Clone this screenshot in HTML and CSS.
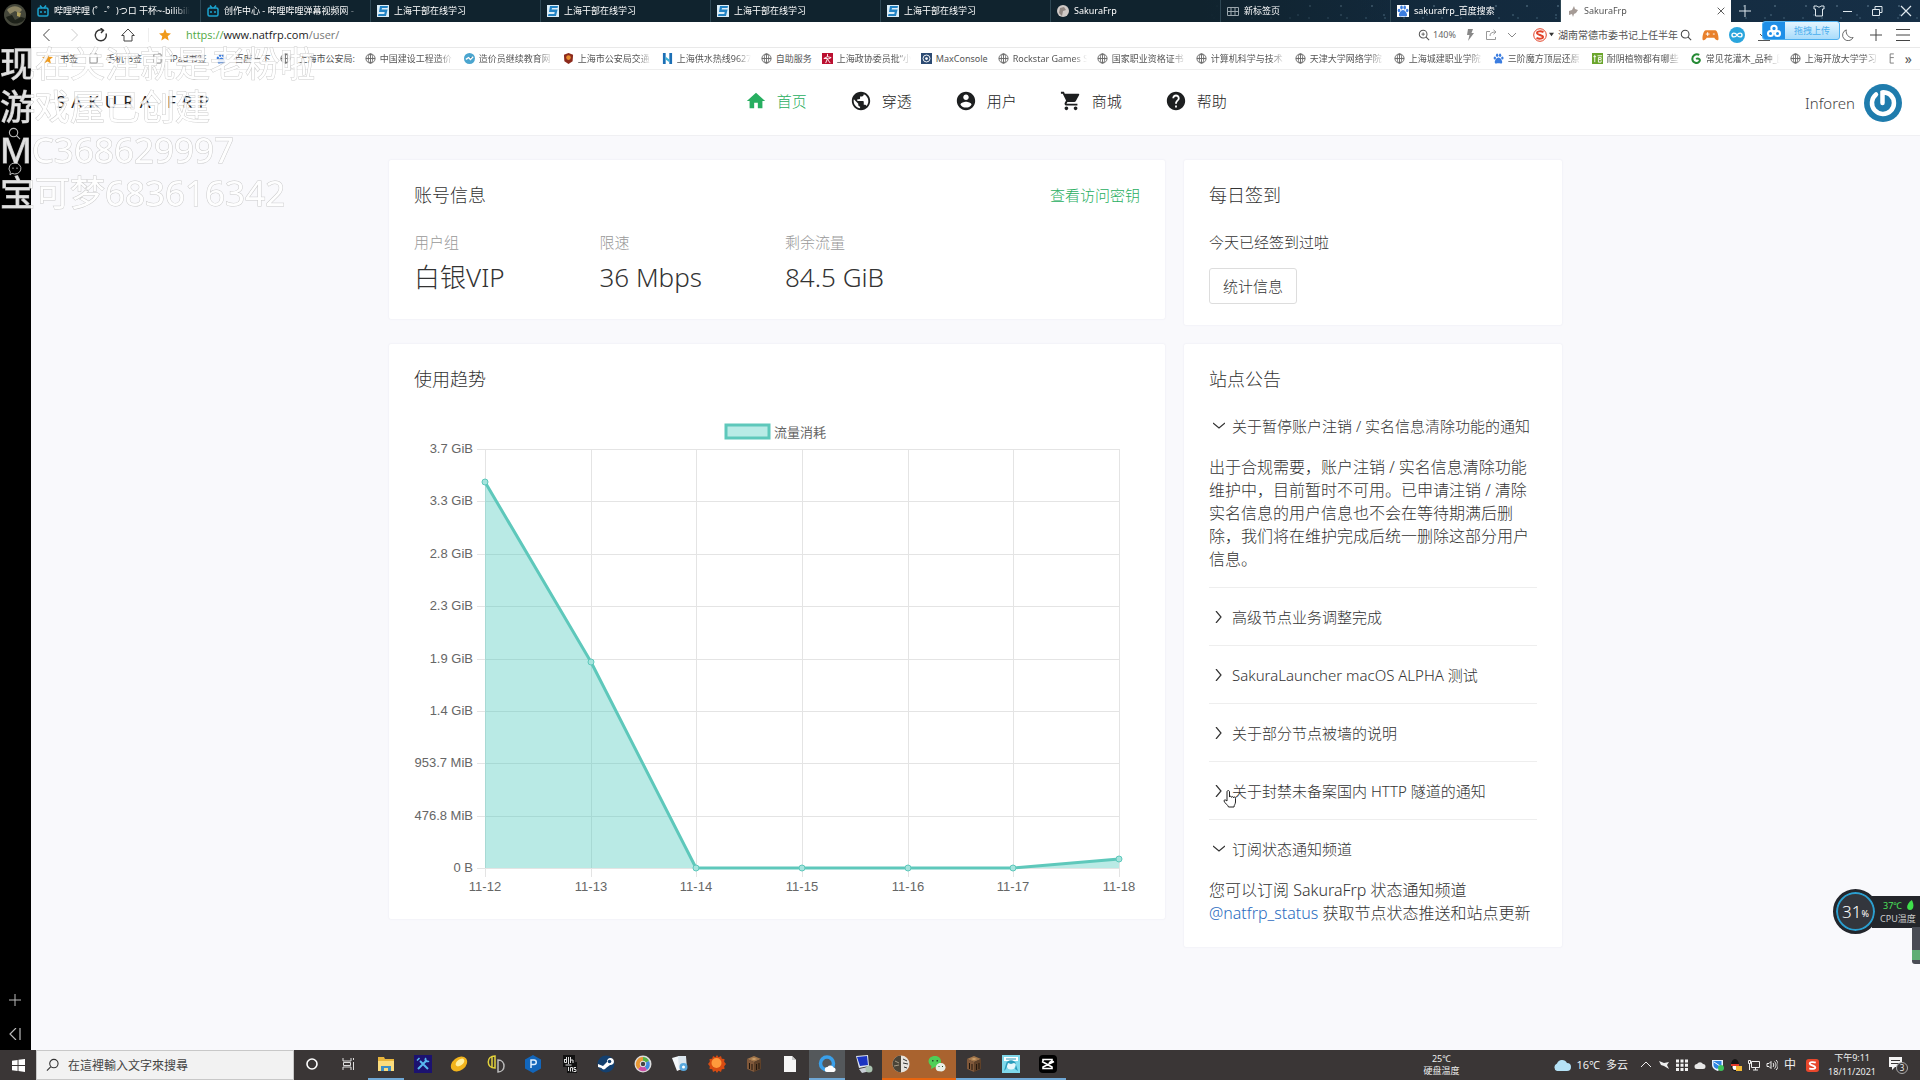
FILE: index.html
```html
<!DOCTYPE html>
<html lang="zh-CN">
<head>
<meta charset="utf-8">
<title>SakuraFrp</title>
<link rel="stylesheet" href="styles.css">
</head>
<body>
<svg class="sprite" aria-hidden="true">
  <symbol id="globe" viewBox="0 0 12 12"><g fill="none" stroke="#666" stroke-width="1"><circle cx="6" cy="6" r="5"/><ellipse cx="6" cy="6" rx="2.4" ry="5"/><path d="M1 6h10M6 1v10"/></g></symbol>
  <symbol id="bili" viewBox="0 0 12 12"><g fill="none" stroke="#1ba4d0" stroke-width="1.5"><rect x="1" y="3" width="10" height="8" rx="1.5"/><path d="M3 .5 5 3M9 .5 7 3M4 6v2M8 6v2"/></g></symbol>
  <symbol id="study" viewBox="0 0 12 12"><path fill="#d9edf9" d="M0 0h12v12H0z"/><path fill="#2182c4" d="M3 1h8l-.5 2H5l-.4 1.5h6L9 11H1l.5-2h5.800l.4-2H2z"/></symbol>
  <symbol id="paw" viewBox="0 0 12 12"><g fill="#3b7de0"><ellipse cx="2" cy="5.500" rx="1.300" ry="1.700"/><ellipse cx="4.500" cy="2.500" rx="1.300" ry="1.900"/><ellipse cx="7.700" cy="2.500" rx="1.300" ry="1.900"/><ellipse cx="10.200" cy="5.500" rx="1.300" ry="1.700"/><path d="M6 5c2 0 4.500 3.500 4 5.500-.5 1.500-2.500.8-4 .8s-3.500.7-4-.8C1.500 8.500 4 5 6 5z"/></g></symbol>
  <symbol id="page" viewBox="0 0 12 12"><rect x="2" y="1" width="8" height="10" rx="1" fill="none" stroke="#777"/></symbol>
  <symbol id="crafting" viewBox="0 0 18 18"><path fill="#a3764a" d="M9 1l7 3-7 3-7-3z"/><path fill="#80583a" d="M2 4l7 3v10l-7-3z"/><path fill="#5f4129" d="M16 4 9 7v10l7-3z"/><path stroke="#23170d" d="M4.500 8v6M7 9v6M11.500 9v6M14 8v6"/><path fill="#d1a671" d="M6 4l3-1 3 1-3 1z"/></symbol>
  <symbol id="sogou" viewBox="0 0 14 14"><path fill="none" stroke="currentColor" stroke-width="2" d="M10.500 4C8 3 4 3 4 5s6 2 6 4-4 2-6.500 1"/></symbol>
  <symbol id="chevron" viewBox="0 0 12 12"><path fill="none" stroke="currentColor" stroke-width="1.200" d="M3 0l5 6-5 6"/></symbol>
  <symbol id="lens" viewBox="0 0 14 14"><g fill="none" stroke="currentColor" stroke-width="1.200"><circle cx="6" cy="6" r="4.500"/><path d="M9.200 9.200 13 13"/></g></symbol>
  <symbol id="plus" viewBox="0 0 12 12"><path fill="none" stroke="currentColor" d="M6 0v12M0 6h12"/></symbol>
  <symbol id="cross" viewBox="0 0 12 12"><path fill="none" stroke="currentColor" stroke-width="1.200" d="M1 1l10 10M11 1 1 11"/></symbol>
</svg>

<div class="desktop">
  <aside class="rail">
    <svg class="rail-avatar" viewBox="0 0 22 22"><circle cx="11" cy="11" r="11" fill="#45473b"/><path fill="#8d8564" d="M3 6c4-5 12-5 15 0l-3 3-4-2-5 3z"/><path fill="#1d2119" d="M2 13l6-2 3 5 6-3 4 1c-2 6-14 9-19-1z"/><path fill="#b3a25c" d="M13 8l4 1-1 4-3-1z"/></svg>
    <svg class="rail-lens" viewBox="0 0 14 14"><use href="#lens"/></svg>
    <svg class="rail-chat" viewBox="0 0 14 14"><path fill="none" stroke="#bbb" d="M7 1a6 5.500 0 1 1-3 10.300L2 13l.3-3A5.500 5.500 0 0 1 7 1z"/><path fill="#bbb" d="M4.500 5.500h1v1.500h-1zM8.500 5.500h1v1.500h-1z"/></svg>
    <button class="rail-btn rail-add" aria-label="添加"><svg viewBox="0 0 12 12"><use href="#plus"/></svg></button>
    <button class="rail-btn" aria-label="收起"><svg viewBox="0 0 12 12"><path fill="none" stroke="#bbb" stroke-width="1.200" d="M7 0 1 6l6 6M11 0v12"/></svg></button>
  </aside>

  <div class="browser">
    <div class="tabs">
      <a class="tab" href="#"><svg><use href="#bili"/></svg><span>哔哩哔哩 (゜-゜)つロ 干杯~-bilibili</span></a>
      <a class="tab" href="#"><svg><use href="#bili"/></svg><span>创作中心 - 哔哩哔哩弹幕视频网 -</span></a>
      <a class="tab" href="#"><svg><use href="#study"/></svg><span>上海干部在线学习</span></a>
      <a class="tab" href="#"><svg><use href="#study"/></svg><span>上海干部在线学习</span></a>
      <a class="tab" href="#"><svg><use href="#study"/></svg><span>上海干部在线学习</span></a>
      <a class="tab" href="#"><svg><use href="#study"/></svg><span>上海干部在线学习</span></a>
      <a class="tab" href="#"><svg viewBox="0 0 12 12"><circle cx="6" cy="6" r="6" fill="#cfc9c6"/><path fill="#8f8681" d="M3 3l4-1 2 3-3 1-1 5-3-3z"/></svg><span>SakuraFrp</span></a>
      <a class="tab" href="#"><svg viewBox="0 0 12 12"><path fill="none" stroke="#9aa6ad" d="M.5 2.500h11v8H.5zM4 2.500v8M8 2.500v8M.5 6.500h11"/></svg><span>新标签页</span></a>
      <a class="tab" href="#"><svg viewBox="0 0 12 12"><path fill="#fff" d="M0 0h12v12H0z"/><use href="#paw"/></svg><span>sakurafrp_百度搜索</span></a>
      <a class="tab tab-on" href="#"><svg viewBox="0 0 12 12"><path fill="#a59b96" d="M2 6l3-1 2-4 1 3 3 1-2 3-2 1-1 3-1-3-3 1z"/></svg><span>SakuraFrp</span><svg class="tab-x"><use href="#cross"/></svg></a>
      <div class="win">
        <button aria-label="新标签"><svg viewBox="0 0 12 12"><use href="#plus"/></svg></button>
        <i class="grow"></i>
        <button aria-label="皮肤"><svg viewBox="0 0 12 12"><path fill="none" stroke="currentColor" d="M1 1h3c1 1.500 3 1.500 4 0h3v3H9.500v7h-7V4H1z"/></svg></button>
        <button aria-label="最小化"><svg viewBox="0 0 12 12"><path stroke="currentColor" d="M1 6.500h9"/></svg></button>
        <button aria-label="还原"><svg viewBox="0 0 12 12"><path fill="none" stroke="currentColor" d="M1.500 4.500h7v6h-7zM4 4V1.500h7v6H9"/></svg></button>
        <button aria-label="关闭"><svg viewBox="0 0 12 12"><use href="#cross"/></svg></button>
      </div>
    </div>

    <div class="bar">
      <div class="bar-nav">
        <button aria-label="后退"><svg viewBox="0 0 14 14"><path fill="none" stroke="#444" d="M9.500 1l-6 6 6 6"/></svg></button>
        <button aria-label="前进"><svg viewBox="0 0 14 14"><path fill="none" stroke="#ccc" d="M4.500 1l6 6-6 6"/></svg></button>
        <button aria-label="刷新"><svg viewBox="0 0 14 14"><path fill="none" stroke="#333" stroke-width="1.400" d="M12 5.500A5.500 5.500 0 1 1 9 2.200M6.500 0 9.500 2.300 7 5"/></svg></button>
        <button aria-label="主页"><svg viewBox="0 0 14 14"><path fill="none" stroke="#444" d="M.7 7.500 7 1l6.300 6.500H11V13H3V7.500z"/></svg></button>
      </div>
      <svg class="star" viewBox="0 0 12 12"><path fill="#f09a1a" d="M6 0l1.700 4 4.300.4-3.300 2.800 1 4.300L6 9.200l-3.700 2.300 1-4.300L0 4.400 4.300 4z"/></svg>
      <div class="url"><b>https://</b>www.natfrp.com<i>/user/</i></div>
      <div class="bar-tools">
        <svg viewBox="0 0 14 14"><g color="#555"><use href="#lens"/></g><path stroke="#555" d="M4 6h4M6 4v4"/></svg>
        <span class="zoom">140%</span>
        <svg class="t-bolt" viewBox="0 0 12 12"><path fill="#888" d="M4 0h5L7.500 4H10L4 12l1.500-6H3z"/></svg>
        <svg class="t-share" viewBox="0 0 12 12"><path fill="none" stroke="#999" d="M5 2.500H1.500v8h9V8M5 7c0-3 2-4 5.500-4M8.500.8l2.500 2.200-2.500 2.200"/></svg>
        <svg class="t-down" viewBox="0 0 12 12"><path fill="none" stroke="#888" d="M2 4l4 4 4-4"/></svg>
        <svg class="t-sogou" viewBox="0 0 14 14"><circle cx="7" cy="7" r="6.300" fill="#fff" stroke="#e2432a"/><g color="#e2432a"><use href="#sogou"/></g></svg>
        <svg class="t-caret" viewBox="0 0 6 6"><path fill="#333" d="M0 1h6L3 5z"/></svg>
        <input class="find" aria-label="搜索" value="湖南常德市委书记上任半年">
        <svg class="t-lens" viewBox="0 0 14 14"><use href="#lens"/></svg>
        <svg class="t-game" viewBox="0 0 18 14"><path fill="#e8802c" d="M4 2h10c2 0 3.500 5 3.500 9 0 2.500-3 2-4.500-1H5c-1.500 3-4.500 3.500-4.500 1C.5 7 2 2 4 2z"/><path stroke="#fff" d="M4 6h4M6 4v4M11.500 6h2"/></svg>
        <svg class="t-inf" viewBox="0 0 16 16"><circle cx="8" cy="8" r="8" fill="#2aa5dd"/><path fill="none" stroke="#fff" stroke-width="1.400" d="M8 8C6.500 5.500 3 5.500 3 8s3.500 2.500 5 0 5-2.500 5 0-3.500 2.500-5 0z"/></svg>
        <svg class="t-load" viewBox="0 0 14 14"><path fill="none" stroke="#555" d="M7 1v8M3 6l4 4 4-4M1 12.500h12"/></svg>
        <svg class="t-moon" viewBox="0 0 14 14"><path fill="none" stroke="#555" d="M5 1a6.500 6.500 0 1 0 8 9C8 11 4 6 5 1z"/></svg>
        <svg class="t-plus" viewBox="0 0 12 12"><use href="#plus"/></svg>
        <svg class="t-menu" viewBox="0 0 14 14"><path stroke="#444" d="M0 1.500h14M0 7h14M0 12.500h14"/></svg>
      </div>
      <button class="drop"><svg viewBox="0 0 22 18"><path fill="#1e8fe8" d="M0 0h22v18H0z"/><g fill="none" stroke="#fff" stroke-width="2"><circle cx="11" cy="6.500" r="2.700"/><circle cx="7.500" cy="11.500" r="2.500"/><circle cx="14.500" cy="11.500" r="2.500"/></g></svg><span>拖拽上传</span></button>
    </div>

    <nav class="marks">
      <a class="wide" href="#"><svg viewBox="0 0 12 12"><path fill="#f09a1a" d="M6 0l1.700 4 4.300.4-3.300 2.800 1 4.300L6 9.200l-3.700 2.300 1-4.300L0 4.400 4.300 4z"/></svg>书签</a>
      <a class="wide" href="#"><svg><use href="#page"/></svg>手机书签</a>
      <a class="wide" href="#"><svg><use href="#page"/></svg>iPad书签</a>
      <a class="wide" href="#"><svg><use href="#paw"/></svg>百度一下</a>
      <a class="wide" href="#"><svg><use href="#globe"/></svg>上海市公安局:</a>
      <a href="#"><svg><use href="#globe"/></svg><span>中国建设工程造价</span></a>
      <a href="#"><svg viewBox="0 0 12 12"><circle cx="6" cy="6" r="6" fill="#4aa5cf"/><path stroke="#fff" stroke-width="1.500" d="M2 7l3-2 2 2 3-3"/></svg><span>造价员继续教育网</span></a>
      <a href="#"><svg viewBox="0 0 12 12"><path fill="#8c2a1c" d="M6 0l5 2-.5 7L6 12 1.500 9 1 2z"/><circle cx="6" cy="5" r="2.500" fill="#e88c2d"/></svg><span>上海市公安局交通</span></a>
      <a href="#"><svg viewBox="0 0 12 12"><path fill="#1c6fb5" d="M1 0h3v12H1zM8 0h3v12H8z"/><path fill="#38b3d8" d="M4 4l4 3v3L4 7z"/></svg><span>上海供水热线9627</span></a>
      <a href="#"><svg><use href="#globe"/></svg>自助服务</a>
      <a href="#"><svg viewBox="0 0 12 12"><path fill="#bb1030" d="M0 0h12v12H0z"/><path fill="none" stroke="#fff" d="M6 1v3L2 6h4l-2 5M6 4l4 1-4 2 3 4"/></svg><span>上海政协委员批“小</span></a>
      <a href="#"><svg viewBox="0 0 12 12"><path fill="#2c4a72" d="M0 0h12v12H0z"/><circle cx="6" cy="6" r="3.800" fill="none" stroke="#fff"/><circle cx="6" cy="6" r="1.500" fill="#fff"/></svg>MaxConsole</a>
      <a href="#"><svg><use href="#globe"/></svg><span>Rockstar Games S</span></a>
      <a href="#"><svg><use href="#globe"/></svg><span>国家职业资格证书</span></a>
      <a href="#"><svg><use href="#globe"/></svg><span>计算机科学与技术</span></a>
      <a href="#"><svg><use href="#globe"/></svg><span>天津大学网络学院</span></a>
      <a href="#"><svg><use href="#globe"/></svg><span>上海城建职业学院</span></a>
      <a href="#"><svg><use href="#paw"/></svg><span>三阶魔方顶层还原</span></a>
      <a href="#"><svg viewBox="0 0 12 12"><path fill="#6aa52b" d="M0 0h12v12H0z"/><path fill="none" stroke="#fff" d="M3 2v8M1.500 4h3M6 3h5M7 5h3v2H7zM7 7v3h3V8"/></svg><span>耐阴植物都有哪些</span></a>
      <a href="#"><svg viewBox="0 0 12 12"><path fill="none" stroke="#258a34" stroke-width="2.200" d="M9 2C5 0 1 3 1.500 7S7 12 9 9.500 8 5 5.500 6.500"/></svg><span>常见花灌木_品种_图</span></a>
      <a href="#"><svg><use href="#globe"/></svg><span>上海开放大学学习</span></a>
      <a class="half" href="#"><svg viewBox="0 0 6 12"><path fill="none" stroke="#777" d="M5 1H1v10h4M1 5h4"/></svg></a>
      <button class="more" aria-label="更多">»</button>
    </nav>

    <header class="site">
      <a class="logo" href="#">SAKURA FRP</a>
      <nav class="menu">
        <a class="on" href="#"><svg viewBox="0 0 24 24"><path d="M10 20v-6h4v6h5v-8h3L12 3 2 12h3v8z"/></svg>首页</a>
        <a href="#"><svg viewBox="0 0 24 24"><path d="M12 2C6.480 2 2 6.480 2 12s4.480 10 10 10 10-4.480 10-10S17.520 2 12 2zm-1 17.930c-3.950-.49-7-3.850-7-7.930 0-.62.080-1.210.21-1.790L9 15v1c0 1.100.9 2 2 2v1.930zm6.900-2.540c-.26-.81-1-1.390-1.900-1.390h-1v-3c0-.55-.45-1-1-1H8v-2h2c.55 0 1-.45 1-1V7h2c1.100 0 2-.9 2-2v-.41c2.930 1.190 5 4.060 5 7.410 0 2.080-.8 3.970-2.100 5.390z"/></svg>穿透</a>
        <a href="#"><svg viewBox="0 0 24 24"><path d="M12 2C6.480 2 2 6.480 2 12s4.480 10 10 10 10-4.480 10-10S17.520 2 12 2zm0 3c1.660 0 3 1.340 3 3s-1.340 3-3 3-3-1.340-3-3 1.340-3 3-3zm0 14.200c-2.500 0-4.710-1.280-6-3.220.030-1.990 4-3.080 6-3.080 1.990 0 5.970 1.090 6 3.080-1.290 1.940-3.500 3.220-6 3.220z"/></svg>用户</a>
        <a href="#"><svg viewBox="0 0 24 24"><path d="M7 18c-1.100 0-1.990.9-1.990 2S5.900 22 7 22s2-.9 2-2-.9-2-2-2zM1 2v2h2l3.600 7.590-1.350 2.450c-.16.28-.25.61-.25.960 0 1.100.9 2 2 2h12v-2H7.420c-.14 0-.25-.11-.25-.25l.030-.12.9-1.630h7.450c.75 0 1.410-.41 1.750-1.030l3.580-6.490c.080-.14.120-.31.120-.48 0-.55-.45-1-1-1H5.210l-.94-2H1zm16 16c-1.100 0-1.990.9-1.990 2s.89 2 1.990 2 2-.9 2-2-.9-2-2-2z"/></svg>商城</a>
        <a href="#"><svg viewBox="0 0 24 24"><path d="M12 2C6.480 2 2 6.480 2 12s4.480 10 10 10 10-4.480 10-10S17.520 2 12 2zm1 17h-2v-2h2v2zm2.070-7.750l-.9.920C13.450 12.900 13 13.500 13 15h-2v-.5c0-1.100.45-2.100 1.170-2.830l1.240-1.260c.37-.36.590-.86.590-1.410 0-1.100-.9-2-2-2s-2 .9-2 2H8c0-2.210 1.790-4 4-4s4 1.790 4 4c0 .88-.36 1.680-.93 2.250z"/></svg>帮助</a>
      </nav>
      <a class="me" href="#">Inforen<svg viewBox="0 0 38 38"><circle cx="19" cy="19" r="19" fill="#1f7cad"/><path fill="none" stroke="#fff" stroke-width="4.500" stroke-linecap="round" d="M12 10.500A11 11 0 1 0 26.500 11C24 8.800 20 8 18.500 8.500V19"/></svg></a>
    </header>

    <main class="page">
      <section class="card">
        <div class="head"><h2>账号信息</h2><a href="#">查看访问密钥</a></div>
        <dl class="stats">
          <div><dt>用户组</dt><dd>白银VIP</dd></div>
          <div><dt>限速</dt><dd>36 Mbps</dd></div>
          <div><dt>剩余流量</dt><dd>84.5 GiB</dd></div>
        </dl>
      </section>

      <section class="card sign">
        <div class="head"><h2>每日签到</h2></div>
        <p>今天已经签到过啦</p>
        <button class="btn">统计信息</button>
      </section>

      <section class="card">
        <div class="head"><h2>使用趋势</h2></div>
        <svg class="chart" viewBox="0 0 726 483">
          <rect x="312" y="15" width="43" height="13" fill="#b9ebe6" stroke="#5ec8bb" stroke-width="3"/>
          <text x="360" y="27">流量消耗</text>
          <path class="grid" d="M63 39.500H705M63 91.500H705M63 144.500H705M63 196.500H705M63 249.500H705M63 301.500H705M63 353.500H705M63 406.500H705M63 458.500H705M71.500 39V467M177.500 39V467M282.500 39V467M388.500 39V467M494.500 39V467M599.500 39V467M705.500 39V467"/>
          <path fill="#4bc8bc" fill-opacity=".39" d="M71 72 177 252 282 458H599L705 449V458H71z"/>
          <path fill="none" stroke="#5ec8bb" stroke-width="3" stroke-linejoin="round" d="M71 72 177 252 282 458H599L705 449"/>
          <g class="dots"><circle cx="71" cy="72" r="3"/><circle cx="177" cy="252" r="3"/><circle cx="282" cy="458" r="3"/><circle cx="388" cy="458" r="3"/><circle cx="494" cy="458" r="3"/><circle cx="599" cy="458" r="3"/><circle cx="705" cy="449" r="3"/></g>
          <g text-anchor="end"><text x="59" y="43">3.7 GiB</text><text x="59" y="95">3.3 GiB</text><text x="59" y="148">2.8 GiB</text><text x="59" y="200">2.3 GiB</text><text x="59" y="253">1.9 GiB</text><text x="59" y="305">1.4 GiB</text><text x="59" y="357">953.7 MiB</text><text x="59" y="410">476.8 MiB</text><text x="59" y="462">0 B</text></g>
          <g text-anchor="middle"><text x="71" y="481">11-12</text><text x="177" y="481">11-13</text><text x="282" y="481">11-14</text><text x="388" y="481">11-15</text><text x="494" y="481">11-16</text><text x="599" y="481">11-17</text><text x="705" y="481">11-18</text></g>
        </svg>
      </section>

      <section class="card news">
        <div class="head"><h2>站点公告</h2></div>
        <details open><summary><svg><use href="#chevron"/></svg>关于暂停账户注销 / 实名信息清除功能的通知</summary>
          <p>出于合规需要，账户注销 / 实名信息清除功能维护中，目前暂时不可用。已申请注销 / 清除实名信息的用户信息也不会在等待期满后删除，我们将在维护完成后统一删除这部分用户信息。</p></details>
        <details><summary><svg><use href="#chevron"/></svg>高级节点业务调整完成</summary></details>
        <details><summary><svg><use href="#chevron"/></svg>SakuraLauncher macOS ALPHA 测试</summary></details>
        <details><summary><svg><use href="#chevron"/></svg>关于部分节点被墙的说明</summary></details>
        <details><summary><svg><use href="#chevron"/></svg>关于封禁未备案国内 HTTP 隧道的通知</summary></details>
        <details open><summary><svg><use href="#chevron"/></svg>订阅状态通知频道</summary>
          <p>您可以订阅 SakuraFrp 状态通知频道<br><a href="#">@natfrp_status</a> 获取节点状态推送和站点更新</p></details>
      </section>
    </main>
  </div>
</div>

<footer class="taskbar">
  <button class="start" aria-label="开始"><svg viewBox="0 0 14 14"><path fill="#fff" d="M0 2l6-1v5.500H0zM7 .9 14 0v6.500H7zM0 7.500h6V13l-6-1zM7 7.500h7V14l-7-1z"/></svg></button>
  <label class="search"><svg viewBox="0 0 14 14"><path fill="none" stroke="#333" stroke-width="1.200" d="M5 9 1 13"/><circle cx="8.500" cy="5.500" r="4.500" fill="none" stroke="#333" stroke-width="1.200"/></svg><input placeholder="在這裡輸入文字來搜尋"></label>
  <div class="apps">
    <a href="#"><svg viewBox="0 0 18 18"><circle cx="9" cy="9" r="5" fill="none" stroke="#fff" stroke-width="1.600"/></svg></a>
    <a href="#"><svg viewBox="0 0 18 18"><path fill="none" stroke="#ddd" d="M3 3v3h8V3M3 15v-3h8v3M3.500 7.500h7v3h-7zM13.500 3v2M13.500 7v8"/></svg></a>
    <a class="run" href="#"><svg viewBox="0 0 18 18"><path fill="#e8b53c" d="M1 2h6l1 2h9v12H1z"/><path fill="#fbdc7d" d="M1 6h16v10H1z"/><path fill="#3e8fc6" d="M4 16v-5h10v5h-3v-3H7v3z"/></svg></a>
    <a href="#"><svg viewBox="0 0 18 18"><path fill="#1c1270" d="M0 0h18v18H0z"/><path stroke="#58b9ef" stroke-width="2" d="M4 14 13 5M6 6l8 8"/><path fill="none" stroke="#58b9ef" stroke-width="1.500" d="M12 3a2 2 0 1 0 3 3M3 5.500 5.500 3"/></svg></a>
    <a href="#"><svg viewBox="0 0 18 18"><ellipse cx="9" cy="9" rx="9" ry="6.500" fill="#f2b41c" transform="rotate(-38 9 9)"/><ellipse cx="10" cy="7.500" rx="5" ry="3" fill="#fff0a0" transform="rotate(-38 10 7.500)"/></svg></a>
    <a href="#"><svg viewBox="0 0 18 18"><g fill="none" stroke-width="1.500"><path stroke="#e2d23c" d="M8 1v12C-1 13-1 1 8 1zM5 2v10"/><path stroke="#bbb" d="M11 5v12c8 0 8-12 0-12z"/></g></svg></a>
    <a href="#"><svg viewBox="0 0 18 18"><path fill="#1266bb" d="M9 0l8 4.500v9L9 18l-8-4.500v-9z"/><path fill="none" stroke="#dff0ff" stroke-width="1.500" d="M7 13V5h3a2 2 0 0 1 0 4.500H7"/></svg></a>
    <a href="#"><svg viewBox="0 0 18 18"><path fill="#111" d="M2 0h12v7h2v11H6v-6H2z"/><path fill="none" stroke="#ddd" d="M3 4.500h2.500v3H3.500v-3M5.500 2v5.500M7.500 2v7M9.500 2v6M9.500 5h2.500v3M4.500 10h6M7.500 12v4M9.500 12.500v4M9.500 12.500h2v4M15 12.500h-2v2h2v2h-2.500"/></svg></a>
    <a href="#"><svg viewBox="0 0 18 18"><circle cx="9" cy="9" r="8.500" fill="#14406f"/><path fill="#fff" d="M1 9l5 2 4-4a3.500 3.500 0 1 1 3 3l-4 3a2.500 2.500 0 0 1-4.500 0L1 12z"/><circle cx="12.500" cy="6.500" r="1.800" fill="#14406f"/></svg></a>
    <a href="#"><svg viewBox="0 0 18 18"><circle cx="9" cy="9" r="8.500" fill="#ddd"/><path fill="#56b34a" d="M9 2a7 7 0 0 1 6 4L9 9z"/><path fill="#3f8ce0" d="M15 6a7 7 0 0 1-2 9L9 9z"/><path fill="#c94fa5" d="M13 15a7 7 0 0 1-9-1l5-5z"/><path fill="#e89836" d="M4 14a7 7 0 0 1 5-12v7z"/><circle cx="9" cy="9" r="2.800" fill="#444" stroke="#eee"/></svg></a>
    <a href="#"><svg viewBox="0 0 18 18"><path fill="#f4f7fa" d="M1 3l7-2 5 12-7 3z"/><path fill="#dbe6ee" d="M7 1h8l1 13H8z"/><circle cx="12.500" cy="12" r="4" fill="#58a8de"/><circle cx="12.500" cy="12" r="1.500" fill="#fff"/></svg></a>
    <a href="#"><svg viewBox="0 0 18 18"><path fill="#d84c12" d="M9 0l1.500 2.200L13 1l.8 2.800 2.700.2-.3 2.700L18 9l-1.800 2.300.3 2.700-2.700.2L13 17l-2.500-1.200L9 18l-1.500-2.200L5 17l-.8-2.800L1.500 14l.3-2.700L0 9l1.800-2.300L1.500 4l2.700-.2L5 1l2.500 1.200z"/><circle cx="8.500" cy="8" r="5" fill="#ff9a3c"/></svg></a>
    <a href="#"><svg><use href="#crafting"/></svg></a>
    <a href="#"><svg viewBox="0 0 18 18"><path fill="#f6f6f6" d="M3 1h8l4 4v12H3z"/><path fill="#c9c9c9" d="M11 1l4 4h-4z"/></svg></a>
    <a class="run active" href="#"><svg viewBox="0 0 18 18"><circle cx="9" cy="8.500" r="6.500" fill="none" stroke="#3aa0ea" stroke-width="3.500"/><path fill="#fff" d="M9 17a2.500 2.500 0 0 1 .5-5 3.500 3.500 0 0 1 6 .5A2.300 2.300 0 0 1 16 17z"/></svg></a>
    <a href="#"><svg viewBox="0 0 18 18"><path fill="#dfe5ee" d="M1 1l12-1 1 11-10 2z"/><path fill="#1b35c2" d="M2 2l10-1 1 9-8 1z"/><path fill="#c9ced6" d="M4 14l9-2 2 4-8 2z"/><circle cx="14" cy="14" r="3.500" fill="#aac3b0"/></svg></a>
    <a class="run alert" href="#"><svg viewBox="0 0 18 18"><circle cx="9" cy="9" r="8.500" fill="#e7e3dd"/><path fill="#4a4438" d="M9 .5a8.500 8.500 0 0 0 0 17z"/><path stroke="#333" d="M11 4l4 2M11 8l5 1M12 12l3 1"/><path stroke="#a49a85" d="M3 6l4 2M2 11l5-1"/></svg></a>
    <a class="run alert" href="#"><svg viewBox="0 0 18 18"><path fill="#4fcf57" d="M7 1c8 0 8 11 0 11l-4 2 .5-3C-1.500 8 0 1 7 1z"/><path fill="#e9efe7" d="M12.500 8c6.500 0 6.500 8 1 8.500L9.500 16C6 14 8 8 12.500 8z"/><path fill="#264f2a" d="M4 5h1.500v1.500H4zM8.500 5H10v1.500H8.500zM10.500 11h1v1h-1zM14 11h1v1h-1z"/></svg></a>
    <a class="run" href="#"><svg><use href="#crafting"/></svg></a>
    <a class="run" href="#"><svg viewBox="0 0 18 18"><path fill="#7fd8ea" d="M0 0h18v18H0z"/><path fill="#fff" d="M2 2h14v4H2z"/><circle cx="9" cy="10" r="4.500" fill="#e7f7fb"/><path fill="#2b9cbb" d="M4 9c1-5 9-5 10 0l-2-1-3 1-3-1-2 6-2 2zM14 10l2 6-3-2zM4 3.500h10v1H4z"/></svg></a>
    <a class="run" href="#"><svg viewBox="0 0 18 18"><rect width="18" height="18" rx="4" fill="#000"/><path fill="none" stroke="#fff" stroke-width="1.600" d="M15 6.500 4 12v1.500h9V12L3 6.500M4 6V4.500h9V6l-3 2"/></svg></a>
  </div>
  <div class="disk">25℃<br>硬盘温度</div>
  <div class="tray">
    <svg class="cloud" viewBox="0 0 18 14"><path fill="#b5e2f6" d="M4 13a4 4 0 0 1 0-7.500A5.500 5.500 0 0 1 14 5a4 4 0 0 1 0 8z"/></svg>
    <span class="temp">16℃</span><span class="temp">多云</span>
    <svg class="up" viewBox="0 0 12 12"><path fill="none" stroke="#eee" d="M1 8l5-5 5 5"/></svg>
    <svg viewBox="0 0 12 12"><path fill="#eee" d="M1 2l5 2 5-1-2 3 2 4-5-3-3-1z"/></svg>
    <svg viewBox="0 0 12 12"><path stroke="#f2f2f2" stroke-width="3" stroke-dasharray="3 1.500" d="M0 2h12M0 6.300h12M0 10.500h12"/></svg>
    <svg viewBox="0 0 12 12"><path fill="#e8e8e8" d="M3 10a2.500 2.500 0 0 1 0-5 3.500 3.500 0 0 1 6 0 2.500 2.500 0 0 1 0 5z"/></svg>
    <svg viewBox="0 0 12 12"><path fill="#e8f3ff" d="M0 1h11v5c0 3-3 5-5.500 6C3 11 0 9 0 6z"/><path fill="#2f86e2" d="M1.500 2h8v4L5 10C3 9 1.500 8 1.500 6z"/><path stroke="#fff" d="M2 3l6 4"/><circle cx="9" cy="9" r="3" fill="#3cc25b"/></svg>
    <svg viewBox="0 0 12 12"><ellipse cx="5" cy="6" rx="4" ry="6" fill="#151515"/><ellipse cx="5" cy="8" rx="2.500" ry="3" fill="#fff"/><path fill="#e33a2a" d="M1 5h8v2H1z"/><path fill="#f3b935" d="M6 7h6v5H6z"/></svg>
    <svg viewBox="0 0 12 12"><path fill="none" stroke="#eee" d="M3.500 2.500h8v6h-8zM5 11h5M7.500 9v2M.5 1.500h2v3h-2zM1.500 5v6"/></svg>
    <svg viewBox="0 0 12 12"><path fill="none" stroke="#eee" d="M1 4.500h2l2-2v7l-2-2H1zM7 4c1 1 1 3 0 4M8.500 2.500c2 2 2 5 0 7M10 1c3 3 3 7 0 10"/></svg>
    <span class="ime">中</span>
    <svg class="so" viewBox="0 0 14 14"><rect width="14" height="14" rx="3" fill="#e8472c"/><g color="#fff"><use href="#sogou"/></g></svg>
    <time class="clock">下午9:11<br>18/11/2021</time>
    <svg class="note" viewBox="0 0 19 18"><path fill="#f4f4f4" d="M0 1h13v10H6l-3 3v-3H0z"/><path stroke="#3a3636" d="M2 4.500h9M2 7.500h9"/><circle cx="13" cy="12" r="5.500" fill="#3a3636" stroke="#aaa"/><text x="13" y="15">3</text></svg>
  </div>
</footer>

<div class="caption">现在关注就是老粉啦<br>游戏屋已创建<br>MC368629997<br>宝可梦683616342</div>

<div class="meter">
  <div class="meter-ring"><strong>31</strong><small>%</small></div>
  <div class="meter-pill"><span class="hot">37℃ <svg viewBox="0 0 8 12"><path fill="#3fe04b" d="M6 0c3 6 2 11-2 11S-1 5 6 0z"/></svg></span><span>CPU温度</span></div>
  <div class="meter-side"></div>
</div>

<svg class="hand" viewBox="0 0 14 18"><path fill="#fff" stroke="#222" d="M4 11V2c0-2 2.500-2 2.500 0v5c0-1 2-1 2 .3 0-1 2-1 2 .4 0-1 2-1 2 .6V12c0 2-1.500 3-1.500 5H5.500c0-1.500-4-4-4.500-6 0-1.500 1.500-1.500 3 0z"/></svg>
</body>
</html>
```
FILE: styles.css
```css
* { box-sizing: border-box; }
body {
  margin: 0;
  min-height: 100vh;
  display: flex;
  flex-direction: column;
  position: relative;
  overflow-x: hidden;
  background: #f9f9fc;
  color: #333;
  font: 300 15px/22px "Noto Sans", "Noto Sans CJK SC", sans-serif;
}
a { color: inherit; text-decoration: none; }
button { padding: 0; border: 0; background: none; color: inherit; font: inherit; }
svg { display: block; flex: none; }
h2, p, dl, dd { margin: 0; }
.sprite { position: absolute; width: 0; height: 0; }
.grow { flex: 1; }

.desktop { flex: 1; display: flex; }
.rail {
  width: 31px;
  display: flex;
  flex-direction: column;
  align-items: center;
  padding: 4px 2px 10px 0;
  background: #000;
  color: #bbb;
}
.rail-avatar { width: 22px; height: 22px; }
.rail-lens { width: 13px; height: 13px; margin-top: 101px; }
.rail-chat { width: 14px; height: 14px; margin-top: 22px; }
.rail-btn svg { width: 12px; height: 12px; }
.rail-btn { height: 12px; }
.rail-add { margin: auto 0 22px; }

.browser { flex: 1; min-width: 0; display: flex; flex-direction: column; }

/* tab strip */
.tabs {
  display: flex;
  height: 22px;
  font: 9px/22px "Noto Sans", "Noto Sans CJK SC", sans-serif;
  color: #fff;
  background:
    linear-gradient(90deg, #10232e 62%, transparent 72%),
    radial-gradient(circle at 8px 6px, #8fb0c4 0, transparent 1px) 0 0 / 31px 22px,
    radial-gradient(circle at 20px 15px, #6f93a8 0, transparent 1px) 0 0 / 43px 22px,
    radial-gradient(circle at 5px 18px, #5d8196 0, transparent 1px) 0 0 / 19px 22px,
    linear-gradient(90deg, #12283a 70%, #162f46);
}
.tab {
  flex: 0 1 170px;
  min-width: 0;
  display: flex;
  align-items: center;
  gap: 5px;
  padding: 0 6px;
  border-right: 1px solid #2d4653;
}
.tab svg { width: 12px; height: 12px; }
.tab span {
  flex: 0 1 136px;
  overflow: hidden;
  white-space: nowrap;
  -webkit-mask: linear-gradient(90deg, #000 88%, transparent);
  mask: linear-gradient(90deg, #000 88%, transparent);
}
.tab-on { background: #fff; color: #555; border: 0; }
.tab .tab-x { width: 8px; height: 8px; margin-left: auto; color: #333; }
.win { flex: 1; display: flex; align-items: center; gap: 17px; padding: 0 8px 0 8px; color: #dfe8ee; }
.win svg { width: 12px; height: 12px; }

/* address bar */
.bar {
  position: relative;
  display: flex;
  align-items: center;
  height: 26px;
  padding: 0 10px 0 9px;
  background: #fff;
  border-bottom: 1px solid #e9e9e9;
}
.bar-nav { display: flex; gap: 13px; padding-right: 13px; border-right: 1px solid #eee; }
.bar-nav svg { width: 14px; height: 14px; }
.star { width: 12px; height: 12px; margin: 0 15px 0 10px; }
.url { flex: 1; font: 400 11px/24px "Open Sans", sans-serif; color: #222; }
.url b { font-weight: 400; color: #53a93f; }
.url i { font-style: normal; color: #777; }
.bar-tools { display: flex; align-items: center; color: #444; }
.bar-tools svg { width: 12px; height: 12px; }
.zoom { margin: 0 8px 0 3px; font: 9px/12px "Noto Sans", sans-serif; color: #666; }
.bar-tools .t-share { margin: 0 9px; }
.bar-tools .t-sogou { width: 14px; height: 14px; margin: 0 2px 0 15px; }
.bar-tools .t-caret { width: 5px; height: 5px; margin-right: 4px; }
.find {
  width: 122px;
  padding: 0;
  border: 0;
  outline: 0;
  background: none;
  color: #555;
  font: 10px/16px "Noto Sans CJK SC", sans-serif;
}
.bar-tools .t-game { width: 17px; height: 14px; margin: 0 10px 0 10px; }
.bar-tools .t-inf { width: 16px; height: 16px; }
.bar-tools .t-load { width: 14px; height: 14px; margin: 0 71px 0 12px; }
.bar-tools .t-plus { margin: 0 14px 0 16px; }
.bar-tools .t-menu { width: 14px; height: 14px; }
.drop {
  position: absolute;
  right: 80px;
  top: -1px;
  display: flex;
  align-items: center;
  width: 78px;
  height: 19px;
  overflow: hidden;
  border: 1px solid #4fb0ef;
  border-radius: 3px;
  background: linear-gradient(#e4f5ff, #a9dcfb);
  color: #4aaeee;
  font: 9px/17px "Noto Sans CJK SC", sans-serif;
}
.drop svg { width: 22px; height: 18px; }
.drop span { flex: 1; }

/* bookmarks */
.marks {
  display: flex;
  align-items: center;
  gap: 10px;
  height: 22px;
  padding: 0 10px 0 11px;
  background: #fff;
  border-bottom: 1px solid #eee;
  color: #555;
  font: 400 9px/21px "Noto Sans", "Noto Sans CJK SC", sans-serif;
  white-space: nowrap;
}
.marks a { display: flex; align-items: center; gap: 4px; }
.marks .wide { gap: 7px; }
.marks svg { width: 11px; height: 11px; }
.marks .half svg { width: 6px; }
.marks span {
  width: 74px;
  overflow: hidden;
  -webkit-mask: linear-gradient(90deg, #000 80%, transparent);
  mask: linear-gradient(90deg, #000 80%, transparent);
}
.more { margin-left: auto; font-size: 14px; }

/* site header */
.site {
  display: grid;
  grid-template-columns: 102fr auto 100fr;
  align-items: center;
  height: 66px;
  padding: 0 18px 0 25px;
  background: #fff;
  border-bottom: 1px solid #f0f0f3;
}
.logo { padding-bottom: 2px; font: 400 17px/24px "Noto Sans", sans-serif; letter-spacing: 6px; color: #222; }
.menu { display: flex; gap: 43px; padding-bottom: 3px; color: #222; }
.menu a { display: flex; align-items: center; gap: 10px; }
.menu svg { width: 22px; height: 22px; fill: #1d1f20; }
.menu .on { color: #27ae60; }
.menu .on svg { fill: #27ae60; }
.me { justify-self: end; display: flex; align-items: center; gap: 9px; color: #444; }
.me svg { width: 38px; height: 38px; }

/* dashboard */
.page {
  width: 100%;
  max-width: 1173px;
  margin: 0 auto;
  padding: 24px 0;
  display: grid;
  grid-template-columns: minmax(0, 776fr) minmax(0, 378fr);
  gap: 19px;
  align-items: start;
}
.card { padding: 23px 25px 25px; background: #fff; border-radius: 2px; box-shadow: 0 0 2px #e6e6ee; }
.head { display: flex; justify-content: space-between; line-height: 24px; }
.head h2 { font-size: 18px; font-weight: 300; }
.head a { color: #27ae60; }
.stats { display: grid; grid-template-columns: repeat(4, 1fr); column-gap: 16px; margin-top: 24px; }
.stats dt { color: #999; }
.stats dd { margin-top: 7px; font-size: 26px; line-height: 34px; white-space: nowrap; }
.sign { padding-bottom: 21px; }
.sign p { margin: 24px 0 15px; }
.btn { display: block; height: 36px; padding: 0 13px; border: 1px solid #ddd; border-radius: 3px; background: #fff; }
.chart { width: 100%; height: auto; margin: 19px 0 1px; overflow: visible; }
.chart text { font: 400 13px "Liberation Sans", "Noto Sans CJK SC", sans-serif; fill: #666; }
.grid { fill: none; stroke: #e4e4e4; }
.dots { fill: #a5e4dd; stroke: #5ec8bb; }

.news { padding-bottom: 6px; }
.news .head { margin-bottom: 6px; }
details { border-bottom: 1px solid #eee; }
details:last-child { border: 0; }
summary { display: flex; align-items: center; gap: 7px; height: 57px; list-style: none; white-space: nowrap; cursor: pointer; }
summary svg { width: 12px; height: 12px; margin-left: 4px; }
details[open] summary svg { transform: rotate(90deg); }
details p { padding: 2px 0 16px; font-size: 16px; line-height: 23px; }
details a { color: #2b6cc0; }

/* taskbar */
.taskbar { display: flex; height: 30px; background: #3a3636; color: #eee; font: 400 9px/12px "Noto Sans", "Noto Sans CJK SC", sans-serif; }
.start { width: 36px; display: grid; place-items: center; }
.start svg { width: 13px; height: 13px; }
.search { width: 258px; display: flex; align-items: center; gap: 9px; padding-left: 9px; background: #f2f2f2; border: 1px solid #c8c8c8; }
.search svg { width: 13px; height: 14px; }
.search input { flex: 1; min-width: 0; padding: 0; border: 0; outline: 0; background: none; font: 12px/20px "Noto Sans CJK TC", sans-serif; }
.search input::placeholder { color: #444; opacity: 1; }
.apps { width: 772px; display: grid; grid-template-columns: repeat(21, 1fr); }
.apps a { display: grid; place-items: center; border-bottom: 2px solid transparent; }
.apps svg { width: 18px; height: 18px; }
.apps .run { border-color: #6fa8d6; }
.apps .active { background: #54585b; }
.apps .alert { background: #a9632f; border-color: #e8650f; }
.disk { margin: auto 93px auto auto; text-align: center; }
.tray { display: flex; align-items: center; gap: 6px; padding-right: 12px; }
.tray svg { width: 12px; height: 12px; }
.tray .cloud { width: 18px; height: 14px; }
.temp { font-size: 11px; }
.tray .up { margin-left: 6px; }
.ime { font-size: 12px; margin-right: 4px; }
.tray .so { width: 13px; height: 13px; }
.clock { margin: 0 7px 0 3px; text-align: center; line-height: 14px; }
.tray .note { width: 19px; height: 18px; }
.note text { font: 8px "Noto Sans", sans-serif; fill: #eee; text-anchor: middle; }

/* overlays */
.caption {
  position: absolute;
  left: 0;
  top: 42px;
  color: #fff;
  font: 400 35px/43px "Noto Sans", "Noto Sans CJK SC", sans-serif;
  -webkit-text-stroke: 1px #c4c4c4;
  paint-order: stroke fill;
  opacity: .88;
  pointer-events: none;
}
.meter { position: absolute; right: 0; top: 889px; display: flex; align-items: center; font: 400 9px/11px "Noto Sans", "Noto Sans CJK SC", sans-serif; }
.meter-ring {
  position: relative;
  z-index: 1;
  width: 45px;
  height: 45px;
  display: flex;
  align-items: center;
  justify-content: center;
  border: 3px solid #23262c;
  border-radius: 50%;
  background: #33363d;
  box-shadow: inset 0 0 0 2px #2b9fd0;
  color: #fff;
}
.meter-ring strong { font-size: 17px; font-weight: 300; }
.meter-ring small { font-size: 9px; padding-top: 4px; }
.meter-pill { display: flex; flex-direction: column; gap: 2px; width: 48px; height: 32px; margin-left: -6px; padding: 4px 0 0 8px; background: #24262b; color: #ccc; white-space: nowrap; }
.hot { display: flex; gap: 4px; padding-left: 3px; color: #4be25a; }
.hot svg { width: 8px; height: 11px; }
.meter-side { position: absolute; right: 0; top: 38px; width: 8px; height: 37px; border-radius: 0 0 0 3px; background: linear-gradient(#4a4d55 62%, #5fae74 62% 90%, #4a4d55 90%); }
.hand { position: absolute; left: 1223px; top: 790px; width: 14px; height: 18px; }
```
